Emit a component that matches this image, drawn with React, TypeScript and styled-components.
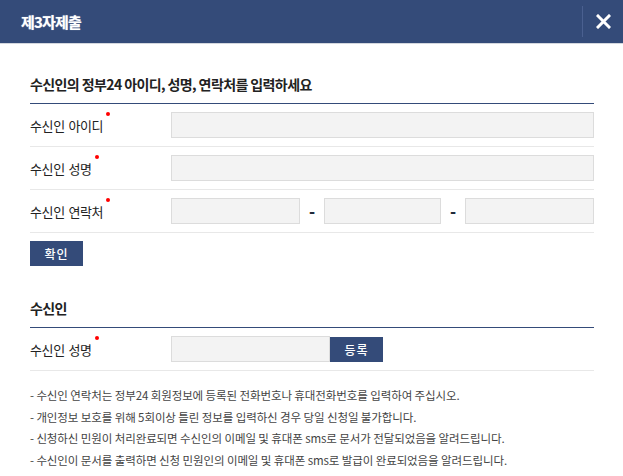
import React from 'react'
import styled, { createGlobalStyle } from 'styled-components'

const GlobalStyle = createGlobalStyle`
  body {
    margin: 0;
    background: #fff;
    font-family: "Noto Sans CJK KR", "Noto Sans", sans-serif;
    color: #222;
  }
`

const NAVY = '#344b79'

const Header = styled.header`
  display: flex;
  align-items: center;
  height: 43px;
  background: ${NAVY};
  border-bottom: 1px solid #d3d7de;
`

const Title = styled.h1`
  flex: 1;
  margin: 0;
  padding-left: 21px;
  font-size: 15px;
  font-weight: 700;
  letter-spacing: -0.8px;
  color: #fff;
  text-shadow: 0 0 1px rgba(255, 255, 255, 0.6);
`

const CloseButton = styled.button`
  display: flex;
  align-items: center;
  justify-content: center;
  width: 41px;
  height: 31px;
  padding: 0;
  border: 0;
  border-left: 1px solid #4a6090;
  background: transparent;
  cursor: pointer;
`

const Body = styled.main`
  padding: 30px 29px 0 30px;
`

const SectionTitle = styled.h2<{ $gap?: number }>`
  margin: ${(p) => p.$gap ?? 0}px 0 0;
  padding-bottom: 9px;
  font-size: 14px;
  line-height: 20px;
  font-weight: 700;
  letter-spacing: -0.6px;
  color: #222;
  border-bottom: 1px solid ${NAVY};
`

const Row = styled.div`
  display: grid;
  grid-template-columns: 141px 1fr;
  align-items: center;
  padding: 8px 0;
  border-bottom: 1px solid #e8e8e8;
`

const Label = styled.span`
  position: relative;
  justify-self: start;
  font-size: 13px;
  letter-spacing: -0.35px;
  word-spacing: 1px;
  color: #222;

  &::after {
    content: '';
    position: absolute;
    right: -7px;
    top: -4px;
    width: 4px;
    height: 4px;
    border-radius: 50%;
    background: #f00;
  }
`

const Field = styled.input<{ $w?: number }>`
  box-sizing: border-box;
  width: ${(p) => (p.$w ? `${p.$w}px` : '100%')};
  height: 26px;
  margin: 0;
  padding: 0 6px;
  border: 1px solid #dcdcdc;
  background: #f3f3f3;
  outline: none;
`

const Phone = styled.div`
  display: flex;
  align-items: center;
`

const Dash = styled.span`
  width: 24px;
  text-align: center;
  font-size: 16px;
  line-height: 16px;
  font-weight: 900;
  color: #1f2a3a;
`

const Inline = styled.div`
  display: flex;
  align-items: center;
`

const NavyButton = styled.button<{ $mt?: number }>`
  width: 53px;
  height: 25px;
  margin-top: ${(p) => p.$mt ?? 0}px;
  padding: 0;
  border: 0;
  background: ${NAVY};
  color: #fff;
  font-family: inherit;
  font-size: 12px;
  font-weight: 500;
  letter-spacing: 1px;
  cursor: pointer;
`

const Notes = styled.ul`
  margin: 14px 0 0;
  padding: 0;
  list-style: none;
`

const Note = styled.li`
  font-size: 11.5px;
  line-height: 21.5px;
  letter-spacing: -0.1px;
  color: #444;
`

const notes = [
  '수신인 연락처는 정부24 회원정보에 등록된 전화번호나 휴대전화번호를 입력하여 주십시오.',
  '개인정보 보호를 위해 5회이상 틀린 정보를 입력하신 경우 당일 신청일 불가합니다.',
  '신청하신 민원이 처리완료되면 수신인의 이메일 및 휴대폰 sms로 문서가 전달되었음을 알려드립니다.',
  '수신인이 문서를 출력하면 신청 민원인의 이메일 및 휴대폰 sms로 발급이 완료되었음을 알려드립니다.',
]

export default function App() {
  return (
    <>
      <GlobalStyle />
      <Header>
        <Title>제3자제출</Title>
        <CloseButton aria-label="닫기">
          <svg width="15" height="15" viewBox="0 0 15 15">
            <path d="M2 2 L13 13 M13 2 L2 13" stroke="#fff" strokeWidth="3" strokeLinecap="square" />
          </svg>
        </CloseButton>
      </Header>
      <Body>
        <SectionTitle>수신인의 정부24 아이디, 성명, 연락처를 입력하세요</SectionTitle>
        <Row>
          <Label>수신인 아이디</Label>
          <Field />
        </Row>
        <Row>
          <Label>수신인 성명</Label>
          <Field />
        </Row>
        <Row>
          <Label>수신인 연락처</Label>
          <Phone>
            <Field $w={129} />
            <Dash>-</Dash>
            <Field $w={117} />
            <Dash>-</Dash>
            <Field $w={129} />
          </Phone>
        </Row>
        <NavyButton $mt={8}>확인</NavyButton>

        <SectionTitle $gap={32}>수신인</SectionTitle>
        <Row>
          <Label>수신인 성명</Label>
          <Inline>
            <Field $w={159} />
            <NavyButton>등록</NavyButton>
          </Inline>
        </Row>
        <Notes>
          {notes.map((n) => (
            <Note key={n}>- {n}</Note>
          ))}
        </Notes>
      </Body>
    </>
  )
}
